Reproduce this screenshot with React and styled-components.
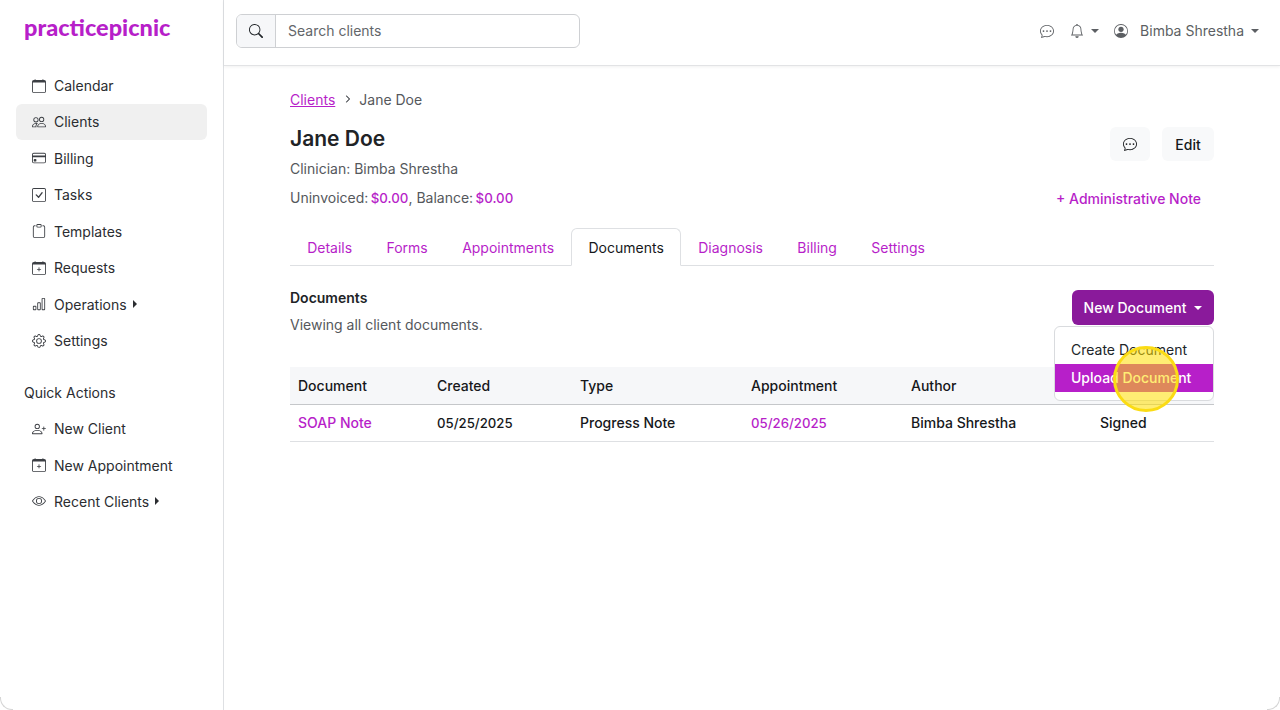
import React from 'react';
import styled, { createGlobalStyle } from 'styled-components';
import {
  BsCalendar, BsPeople, BsCreditCard, BsCheckSquare, BsClipboard, BsCalendarPlus,
  BsBarChart, BsGear, BsPersonPlus, BsEye, BsChatDots, BsBell, BsPersonCircle, BsSearch,
  BsChevronRight,
} from 'react-icons/bs';

const PURPLE = '#b71fc9';

const Global = createGlobalStyle`
  html, body { margin: 0; padding: 0; background: #fff; }
  body { font-family: Inter, "Liberation Sans", sans-serif; font-size: 14px; color: #212529; }
  * { box-sizing: border-box; }
`;

const Page = styled.div`
  display: flex;
  width: 1280px;
  height: 710px;
  overflow: hidden;
  position: relative;

  /* rounded window corners */
  &::before, &::after {
    content: '';
    position: absolute;
    bottom: 0;
    width: 12px;
    height: 12px;
    border-bottom: 1px solid #d5d5d5;
  }
  &::before { left: 0; border-left: 1px solid #d5d5d5; border-bottom-left-radius: 12px; }
  &::after { right: 0; border-right: 1px solid #d5d5d5; border-bottom-right-radius: 12px; }
`;

const Sidebar = styled.aside`
  width: 224px;
  flex: none;
  border-right: 1px solid #dee0e3;
  padding: 14px 16px 0;
`;

const Logo = styled.div`
  font-family: Lato, sans-serif;
  font-size: 23.5px;
  font-weight: 900;
  line-height: 26px;
  color: ${PURPLE};
  margin: 0 0 27.5px 8px;
`;

const NavList = styled.nav`
  display: flex;
  flex-direction: column;
  gap: 0.45px;
`;

const NavItem = styled.div`
  display: flex;
  align-items: center;
  height: 36px;
  padding-left: 16px;
  border-radius: 6px;
  color: #2b2d31;
  background: ${p => (p.$active ? '#f0f0f0' : 'transparent')};
  svg { font-size: 14px; margin-right: 8px; flex: none; color: #3c3f44; }
`;

const Caret = styled.span`
  width: 0;
  height: 0;
  margin-left: ${p => p.$gap || 6}px;
  border-top: ${p => (p.$down ? '4px solid currentColor' : '4px solid transparent')};
  border-bottom: ${p => (p.$down ? '0' : '4px solid transparent')};
  border-left: ${p => (p.$down ? '4px solid transparent' : '4px solid currentColor')};
  border-right: ${p => (p.$down ? '4px solid transparent' : '0')};
`;

const QuickTitle = styled.div`
  margin: 25.5px 0 8.5px 8px;
  line-height: 18px;
  color: #2b2d31;
`;

const Main = styled.div`
  flex: 1;
  display: flex;
  flex-direction: column;
  min-width: 0;
`;

const TopBar = styled.header`
  height: 66px;
  flex: none;
  display: flex;
  align-items: center;
  justify-content: space-between;
  padding: 0 21px 4px 12px;
  border-bottom: 1px solid #e2e3e5;
  box-shadow: 0 1px 3px rgba(0, 0, 0, 0.06);
`;

const SearchBox = styled.div`
  display: flex;
  width: 344px;
  height: 34px;
  border: 1px solid #ced0d3;
  border-radius: 6px;
  overflow: hidden;
`;

const SearchIcon = styled.div`
  width: 39px;
  display: flex;
  align-items: center;
  justify-content: center;
  background: #f6f7f9;
  border-right: 1px solid #ced0d3;
  color: #212529;
`;

const SearchText = styled.div`
  flex: 1;
  display: flex;
  align-items: center;
  padding-left: 12px;
  color: #63666a;
`;

const TopActions = styled.div`
  display: flex;
  align-items: center;
  color: #5c5f63;
`;

const TopIcon = styled.span`
  display: flex;
  align-items: center;
  font-size: 14px;
  margin-left: ${p => p.$before || 0}px;
  margin-right: ${p => p.$after || 0}px;
`;

const Content = styled.main`
  padding: 24px 66px 0;
`;

const Breadcrumb = styled.div`
  display: flex;
  align-items: center;
  height: 18px;
  color: #55585c;
  a { color: ${PURPLE}; text-decoration: underline; }
`;

const Crumb = styled.span`
  margin: 0 7px 0 9px;
  display: flex;
  color: #55585c;
  svg { stroke: currentColor; stroke-width: 1.4px; }
`;

const ClientHead = styled.div`
  display: flex;
  justify-content: space-between;
  margin-top: 17px;
`;

const ClientName = styled.h1`
  margin: 0;
  font-size: 21px;
  line-height: 28px;
  font-weight: 600;
  color: #212326;
`;

const Meta = styled.div`
  color: #55585c;
  line-height: 18px;
  margin-top: ${p => p.$top}px;
`;

const Money = styled.span`
  color: ${PURPLE};
  font-size: 13.3px;
  font-weight: 500;
  margin-left: -1.5px;
`;

const HeadActions = styled.div`
  display: flex;
  flex-direction: column;
  align-items: flex-end;
  padding-top: 2px;
`;

const ButtonRow = styled.div`
  display: flex;
  gap: 12px;
`;

const GhostButton = styled.button`
  height: 34px;
  width: ${p => p.$w}px;
  border: 0;
  border-radius: 6px;
  background: #f8f9fa;
  font: inherit;
  font-weight: 500;
  color: #16181b;
  display: flex;
  align-items: center;
  justify-content: center;
  padding: 0;
`;

const AdminNote = styled.div`
  color: ${PURPLE};
  font-weight: 500;
  line-height: 18px;
  margin: 29px 13px 0 0;
`;

const Tabs = styled.div`
  display: flex;
  height: 38px;
  margin-top: 20px;
  border-bottom: 1px solid #dee0e3;
`;

const Tab = styled.div`
  height: 38px;
  padding: 0 16.2px;
  display: flex;
  align-items: center;
  color: ${p => (p.$active ? '#16181b' : PURPLE)};
  background: ${p => (p.$active ? '#fff' : 'transparent')};
  border: 1px solid ${p => (p.$active ? '#dee0e3' : 'transparent')};
  border-bottom-color: ${p => (p.$active ? '#fff' : 'transparent')};
  border-radius: 6px 6px 0 0;
`;

const DocHead = styled.div`
  display: flex;
  justify-content: space-between;
  margin-top: 23px;
`;

const DocTitle = styled.div`
  font-weight: 600;
  color: #212326;
  line-height: 18px;
`;

const DocNote = styled.div`
  color: #55585c;
  line-height: 18px;
  margin-top: 9px;
`;

const DropWrap = styled.div`
  position: relative;
  margin-top: 1px;
`;

const PrimaryButton = styled.button`
  width: 142px;
  height: 35px;
  border: 0;
  border-radius: 6px;
  background: #8a1a9b;
  color: #fff;
  font: inherit;
  font-weight: 500;
  display: flex;
  align-items: center;
  justify-content: center;
  padding: 0;
`;

const DropMenu = styled.div`
  position: absolute;
  top: 36px;
  right: 0;
  width: 160px;
  height: 75px;
  padding-top: 8px;
  background: #fff;
  border: 1px solid #d9dbde;
  border-radius: 6px;
  z-index: 2;
`;

const DropItem = styled.div`
  height: 28.5px;
  padding-left: 16px;
  display: flex;
  align-items: center;
  color: ${p => (p.$active ? '#fff' : '#212529')};
  background: ${p => (p.$active ? PURPLE : 'transparent')};
  font-weight: ${p => (p.$active ? 500 : 400)};
`;

const DocTable = styled.table`
  width: 924px;
  margin-top: 33px;
  border-collapse: collapse;
  table-layout: fixed;
  th, td { padding: 0 8px; text-align: left; font-weight: 450; color: #16181b; }
  th { height: 37px; background: #f6f7f9; border-bottom: 1px solid #c5c7ca; }
  td { height: 37px; border-bottom: 1px solid #dee0e3; }
`;

const Link = styled.span`
  color: ${PURPLE};
  font-weight: 450;
`;

const DateText = styled.span`
  font-size: 13.2px;
`;

const Cursor = styled.div`
  position: absolute;
  left: 1113px;
  top: 346px;
  width: 66px;
  height: 66px;
  border-radius: 50%;
  background: rgba(255, 222, 0, 0.55);
  border: 3px solid #fbdc14;
  z-index: 5;
`;

const mainNav = [
  { icon: BsCalendar, label: 'Calendar' },
  { icon: BsPeople, label: 'Clients', active: true },
  { icon: BsCreditCard, label: 'Billing' },
  { icon: BsCheckSquare, label: 'Tasks' },
  { icon: BsClipboard, label: 'Templates' },
  { icon: BsCalendarPlus, label: 'Requests' },
  { icon: BsBarChart, label: 'Operations', more: true },
  { icon: BsGear, label: 'Settings' },
];

const quickNav = [
  { icon: BsPersonPlus, label: 'New Client' },
  { icon: BsCalendarPlus, label: 'New Appointment' },
  { icon: BsEye, label: 'Recent Clients', more: true },
];

const tabs = ['Details', 'Forms', 'Appointments', 'Documents', 'Diagnosis', 'Billing', 'Settings'];
const columns = [139, 143, 171, 160, 189, 122];

function NavGroup({ items }) {
  return (
    <NavList>
      {items.map(({ icon: Icon, label, active, more }) => (
        <NavItem key={label} $active={active}>
          <Icon />
          {label}
          {more && <Caret />}
        </NavItem>
      ))}
    </NavList>
  );
}

export default function App() {
  return (
    <Page>
      <Global />
      <Sidebar>
        <Logo>practicepicnic</Logo>
        <NavGroup items={mainNav} />
        <QuickTitle>Quick Actions</QuickTitle>
        <NavGroup items={quickNav} />
      </Sidebar>
      <Main>
        <TopBar>
          <SearchBox>
            <SearchIcon><BsSearch size={14} /></SearchIcon>
            <SearchText>Search clients</SearchText>
          </SearchBox>
          <TopActions>
            <TopIcon $after={16}><BsChatDots /></TopIcon>
            <TopIcon><BsBell /></TopIcon>
            <Caret $down $gap={7} />
            <TopIcon $before={15} $after={12}><BsPersonCircle /></TopIcon>
            Bimba Shrestha
            <Caret $down $gap={7} />
          </TopActions>
        </TopBar>
        <Content>
          <Breadcrumb>
            <a>Clients</a>
            <Crumb><BsChevronRight size={8} /></Crumb>
            Jane Doe
          </Breadcrumb>
          <ClientHead>
            <div>
              <ClientName>Jane Doe</ClientName>
              <Meta $top={7}>Clinician: Bimba Shrestha</Meta>
              <Meta $top={11}>Uninvoiced: <Money>$0.00</Money>, Balance: <Money>$0.00</Money></Meta>
            </div>
            <HeadActions>
              <ButtonRow>
                <GhostButton $w={40}><BsChatDots /></GhostButton>
                <GhostButton $w={52}>Edit</GhostButton>
              </ButtonRow>
              <AdminNote>+ Administrative Note</AdminNote>
            </HeadActions>
          </ClientHead>
          <Tabs>
            {tabs.map(tab => <Tab key={tab} $active={tab === 'Documents'}>{tab}</Tab>)}
          </Tabs>
          <DocHead>
            <div>
              <DocTitle>Documents</DocTitle>
              <DocNote>Viewing all client documents.</DocNote>
            </div>
            <DropWrap>
              <PrimaryButton>New Document<Caret $down $gap={8} /></PrimaryButton>
              <DropMenu>
                <DropItem>Create Document</DropItem>
                <DropItem $active>Upload Document</DropItem>
              </DropMenu>
            </DropWrap>
          </DocHead>
          <DocTable>
            <colgroup>
              {columns.map((w, i) => <col key={i} width={w} />)}
            </colgroup>
            <thead>
              <tr>
                <th>Document</th><th>Created</th><th>Type</th><th>Appointment</th><th>Author</th><th>Status</th>
              </tr>
            </thead>
            <tbody>
              <tr>
                <td><Link>SOAP Note</Link></td>
                <td><DateText>05/25/2025</DateText></td>
                <td>Progress Note</td>
                <td><Link><DateText>05/26/2025</DateText></Link></td>
                <td>Bimba Shrestha</td>
                <td>Signed</td>
              </tr>
            </tbody>
          </DocTable>
        </Content>
      </Main>
      <Cursor />
    </Page>
  );
}
